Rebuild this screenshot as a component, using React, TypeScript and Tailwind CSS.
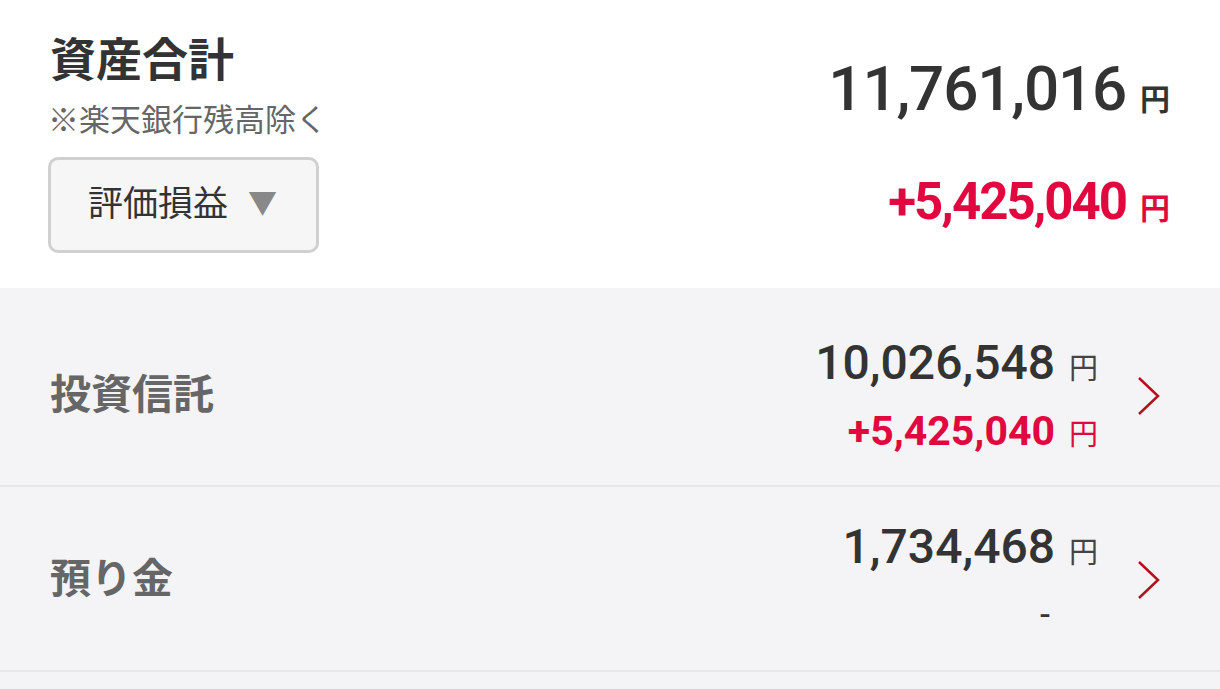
import React from 'react';

const rows = [
  { id: 1, label: '投資信託', amount: '10,026,548', diff: '+5,425,040', pad: 'pt-[46px] pb-[27px]' },
  { id: 2, label: '預り金', amount: '1,734,468', diff: '', pad: 'pt-[31px] pb-[28px]' },
];

function Chevron() {
  return (
    <svg width="26" height="40" viewBox="0 0 26 40" fill="none" className="shrink-0">
      <path d="M3 2 L22 20 L3 38" stroke="#b3121b" strokeWidth="2.5" />
    </svg>
  );
}

export default function App() {
  return (
    <div className="w-[1220px] h-[689px] overflow-hidden bg-[#f4f4f6] text-[#333] font-['Roboto','Noto_Sans_CJK_JP',sans-serif]">
      {/* total */}
      <div className="h-[288px] bg-white flex justify-between pl-[50px] pr-[50px]">
        <div className="pt-[28px]">
          <div className="text-[46px] font-bold leading-[64px]">資産合計</div>
          <div className="mt-[10px] text-[31px] leading-[38px] text-[#666] -ml-[2px]">※楽天銀行残高除く</div>
          <button className="mt-[17px] -ml-[2px] w-[271px] h-[96px] rounded-[10px] border-[3px] border-[#d0d0d0] bg-[#f6f6f6] flex items-center pl-[37px] gap-[20px]">
            <span className="text-[35px] text-[#333]">評価損益</span>
            <span className="text-[29px] text-[#888]">▼</span>
          </button>
        </div>
        <div className="flex flex-col items-end pt-[54px]">
          <div className="flex items-baseline gap-[14px]">
            <span className="text-[62px] font-medium leading-[70px] tracking-[-1.2px]">11,761,016</span>
            <span className="text-[30px] font-bold">円</span>
          </div>
          <div className="flex items-baseline gap-[14px] mt-[48px] text-[#e0083f]">
            <span className="text-[51px] font-bold leading-[60px] tracking-[-2px]">+5,425,040</span>
            <span className="text-[30px] font-bold">円</span>
          </div>
        </div>
      </div>

      {rows.map((r) => (
        <div key={r.id} className={`flex items-center justify-between pl-[50px] pr-[58px] border-b-[2px] border-[#e7e7e9] ${r.pad}`}>
          <div className="text-[41px] font-bold text-[#666]">{r.label}</div>
          <div className="flex items-center gap-[38px]">
            <div className="flex flex-col items-end">
              <div className="flex items-baseline gap-[14px]">
                <span className="text-[48px] font-medium leading-[58px]">{r.amount}</span>
                <span className="text-[29px] text-[#444]">円</span>
              </div>
              {r.diff ? (
                <div className="mt-[12px] flex items-baseline gap-[14px] text-[#e0083f]">
                  <span className="text-[41px] font-bold leading-[54px]">{r.diff}</span>
                  <span className="text-[29px]">円</span>
                </div>
              ) : (
                <div className="mt-[12px] text-[36px] leading-[54px] pr-[48px] text-[#333]">-</div>
              )}
            </div>
            <Chevron />
          </div>
        </div>
      ))}
    </div>
  );
}
